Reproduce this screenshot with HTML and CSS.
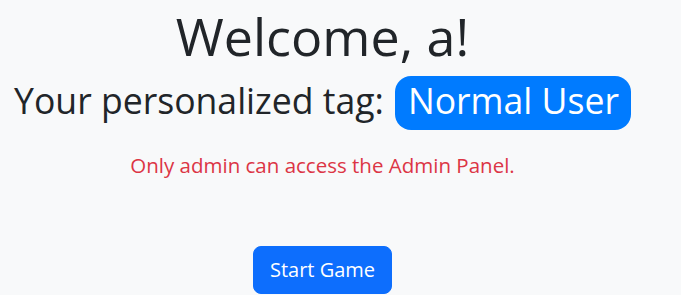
FILE: index.html
```html
<!DOCTYPE html>
<html lang="en">

<head>
    <meta charset="UTF-8">
    <meta name="viewport" content="width=device-width, initial-scale=1.0">
    <title>Home</title>
    <link rel="stylesheet" href="styles.css">
</head>

<body>
    <div class="page">
        <h1 class="welcome">Welcome, a!</h1>
        <h2 class="tag-line">Your personalized tag: <span class="badge">Normal User</span></h2>
        <p class="notice">Only admin can access the Admin Panel.</p>
        <button class="btn-start">Start Game</button>
    </div>
</body>

</html>
```

FILE: styles.css
```css
* {
    margin: 0;
    padding: 0;
    box-sizing: border-box;
}

body {
    background: #f8f9fa;
    color: #212529;
    font-family: "Open Sans", "Noto Sans", sans-serif;
}

.page {
    display: flex;
    flex-direction: column;
    align-items: center;
    padding: 5px 36px 0 0;
}

.welcome {
    font-size: 52px;
    font-weight: 400;
    line-height: 1.2;
}

.tag-line {
    display: flex;
    align-items: baseline;
    gap: 11px;
    margin-top: 9px;
    font-size: 35.6px;
    font-weight: 400;
    line-height: 1.2;
}

.badge {
    background: #007bff;
    color: #fff;
    padding: 3px 12px 8px 13px;
    border-radius: 16px;
}

.notice {
    color: #dc3545;
    font-size: 20.5px;
    line-height: 1.5;
    margin-top: 20px;
}

.btn-start {
    margin-top: 65px;
    background: #0d6efd;
    color: #fff;
    border: 1px solid #0d6efd;
    border-radius: 8px;
    font-family: inherit;
    font-size: 20px;
    line-height: 1.5;
    padding: 8px 16px;
}
```
